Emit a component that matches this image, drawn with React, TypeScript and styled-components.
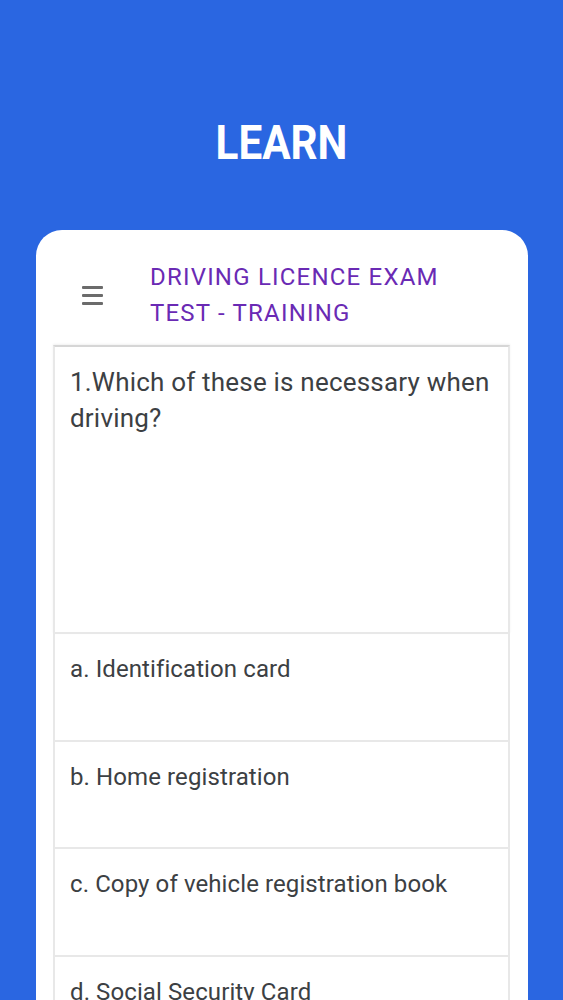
import styled, { createGlobalStyle } from 'styled-components';

const GlobalStyle = createGlobalStyle`
  html, body {
    margin: 0;
    padding: 0;
  }
  body {
    font-family: Roboto, "Noto Sans", Arial, sans-serif;
    background: #2a66e1;
  }
`;

const Page = styled.div`
  height: 1000px;
  overflow: hidden;
  background: #2a66e1;
  display: flex;
  flex-direction: column;
`;

const Heading = styled.h1`
  margin: 119px 0 0;
  text-align: center;
  color: #ffffff;
  font-size: 48px;
  font-weight: 700;
  line-height: 48px;
  transform: scaleX(0.88);
`;

const Card = styled.div`
  margin: 63px 35px 0 36px;
  flex: 1;
  background: #ffffff;
  border-radius: 26px 26px 0 0;
  display: flex;
  flex-direction: column;
`;

const Header = styled.div`
  display: flex;
  align-items: center;
  padding: 29px 0 14px 46px;
`;

const Burger = styled.div`
  width: 21px;
  display: flex;
  flex-direction: column;
  gap: 5px;
  margin-right: 47px;

  span {
    display: block;
    height: 3px;
    background: #6b6b6b;
    border-radius: 1px;
  }
`;

const Title = styled.div`
  color: #6a2ab4;
  font-size: 24px;
  line-height: 36px;
  letter-spacing: 1.2px;
`;

const Body = styled.div`
  margin: 0 18px 0 17px;
  display: flex;
  flex-direction: column;
`;

const Question = styled.div`
  height: 289px;
  box-sizing: border-box;
  border: 2px solid #e8e8e8;
  border-top-color: #d6d6d6;
  box-shadow: 0 -1px 2px rgba(0, 0, 0, 0.06);
  padding: 17px 15px 0;
  color: #3c4043;
  font-size: 26px;
  line-height: 36px;
  letter-spacing: 0.2px;
`;

const Option = styled.div`
  height: 107.5px;
  box-sizing: border-box;
  border: 2px solid #e8e8e8;
  border-top: none;
  padding: 20px 15px 0;
  color: #3c4043;
  font-size: 24px;
  line-height: 30px;
  letter-spacing: 0.1px;
`;

const options = [
  'a. Identification card',
  'b. Home registration',
  'c. Copy of vehicle registration book',
  'd. Social Security Card',
];

export default function App() {
  return (
    <>
      <GlobalStyle />
      <Page>
        <Heading>LEARN</Heading>
        <Card>
          <Header>
            <Burger>
              <span />
              <span />
              <span />
            </Burger>
            <Title>
              DRIVING LICENCE EXAM
              <br />
              TEST - TRAINING
            </Title>
          </Header>
          <Body>
            <Question>1.Which of these is necessary when driving?</Question>
            {options.map((o) => (
              <Option key={o}>{o}</Option>
            ))}
          </Body>
        </Card>
      </Page>
    </>
  );
}
